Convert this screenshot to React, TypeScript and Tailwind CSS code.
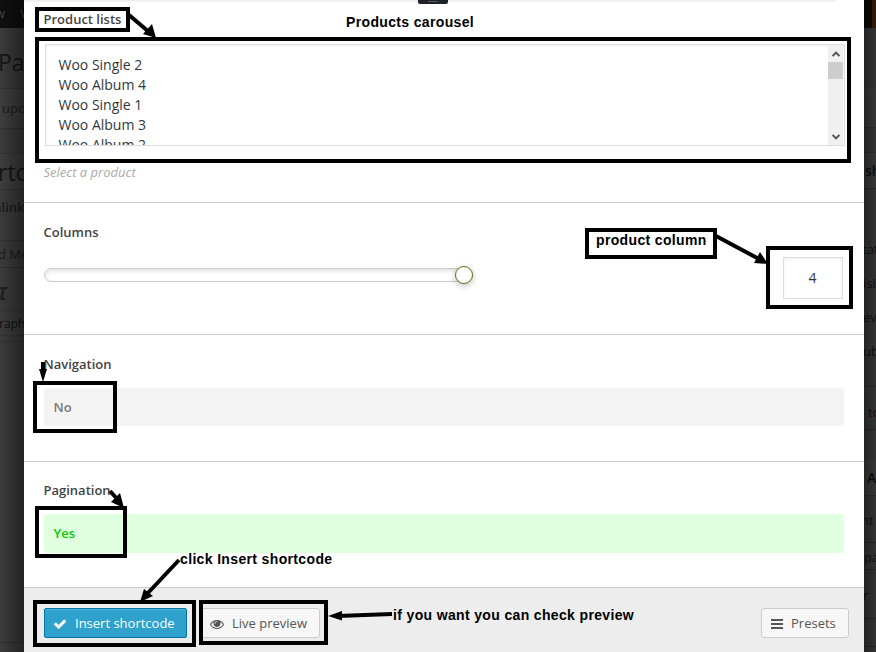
import React from 'react';

type StripRow = { height: string; text?: string; style?: string };

const leftRows: StripRow[] = [
  { height: 'h-[60px]', text: 'Pa', style: 'text-[23px] leading-[68px] -ml-[2px] text-[#161616]' },
  { height: 'h-[41px] border-y border-[#343434] bg-[#3e3e3e]', text: 'upd', style: 'text-[13px] leading-[39px] ml-[2px] text-[#1c1c1c]' },
  { height: 'h-[25px] border-b border-[#343434]' },
  { height: 'h-[36px] border-b border-[#343434] bg-[#3e3e3e]', text: 'rtc', style: 'text-[23px] leading-[36px] -ml-[2px] text-[#161616]' },
  { height: 'h-[51px] border-b border-[#343434]', text: 'alink', style: 'text-[13px] font-semibold leading-[35px] -ml-[6px] text-[#1c1c1c]' },
  { height: 'h-[27px] border-b border-[#303030]', text: 'd Me', style: 'text-[13px] leading-[26px] -ml-[2px] text-[#1c1c1c]' },
  { height: 'h-[43px] border-b border-[#343434]', text: 'I', style: 'text-[18px] leading-[51px] font-bold italic -ml-[3px] font-["DejaVu_Sans_Mono",monospace] text-[#202020]' },
  { height: 'h-[25px] border-b border-[#343434]', text: 'raph', style: 'text-[12px] leading-[26px] -ml-[1px] text-[#0f0f0f]' },
  { height: 'h-[6px] border-b border-[#343434]' },
  { height: 'h-[301px] border-b border-[#303030]' },
];

const rightRows: StripRow[] = [
  { height: 'h-[61px]' },
  { height: 'h-[39px] border-b border-[#2a2a2a] bg-[#363636]' },
  { height: 'h-[25px] border-b border-[#2c2c2c]' },
  { height: 'h-[36px] border-b border-[#2a2a2a] bg-[#363636]', text: 'sh', style: 'text-[14px] font-semibold leading-[36px] ml-[1px] text-[#0d0d0d]' },
  { height: 'h-[44px]' },
  { height: 'h-[34px]', text: 'tat', style: 'text-[13px] leading-[33px] -ml-[2px] text-[#111]' },
  { height: 'h-[34px]', text: 'isi', style: 'text-[13px] leading-[33px] -ml-[1px] text-[#111]' },
  { height: 'h-[34px]', text: 'ev', style: 'text-[13px] leading-[33px] -ml-[1px] text-[#111]' },
  { height: 'h-[52px] border-b border-[#2a2a2a]', text: 'ub', style: 'text-[13px] leading-[33px] -ml-[1px] text-[#111]' },
  { height: 'h-[43px] border-b border-[#262626]', text: 'to', style: 'text-[13px] leading-[51px] ml-[4px] text-[#2a0a0a]' },
  { height: 'h-[29px]' },
  { height: 'h-[37px] border-b border-[#2a2a2a] bg-[#363636]', text: 'A', style: 'text-[14px] font-semibold leading-[37px] ml-[3px] text-[#0d0d0d]' },
  { height: 'h-[47px] border-b border-[#262626]', text: 'nt', style: 'text-[13px] leading-[48px] -ml-[3px] text-[#111]' },
  { height: 'h-[27px] border-b border-[#262626]', text: 'pa', style: 'text-[13px] leading-[29px] text-[#111]' },
  { height: 'h-[49px] border-b border-[#262626]', text: 'r', style: 'text-[13px] leading-[50px] -ml-[1px] text-[#111]' },
  { height: 'h-[28px] border-b border-[#262626]' },
];

function Strip({ rows }: { rows: StripRow[] }) {
  return (
    <>
      {rows.map((row, i) => (
        <div key={i} className={`shrink-0 overflow-hidden whitespace-nowrap ${row.height}`}>
          {row.text && <div className={row.style}>{row.text}</div>}
        </div>
      ))}
    </>
  );
}

const products = ['Woo Single 2', 'Woo Album 4', 'Woo Single 1', 'Woo Album 3', 'Woo Album 2'];

function Label({ children }: { children: React.ReactNode }) {
  return <div className="-ml-[0.5px] h-5 text-[13px] font-semibold leading-5 text-[#444]">{children}</div>;
}

function Chevron({ up = false }: { up?: boolean }) {
  return (
    <svg width="8" height="6" viewBox="0 0 8 6" className={up ? '' : 'rotate-180'}>
      <path d="M0.6 5 4 1.6 7.4 5" fill="none" stroke="#555" strokeWidth="2" />
    </svg>
  );
}

function Check() {
  return (
    <svg width="14" height="14" viewBox="0 0 1792 1792" fill="currentColor">
      <path d="M1671 566q0 40-28 68l-724 724-136 136q-28 28-68 28t-68-28l-136-136-362-362q-28-28-28-68t28-68l136-136q28-28 68-28t68 28l294 295 656-657q28-28 68-28t68 28l136 136q28 28 28 68z" />
    </svg>
  );
}

function Eye() {
  return (
    <svg width="14" height="14" viewBox="0 0 1792 1792" fill="currentColor">
      <path d="M1664 960q-152-236-381-353 61 104 61 225 0 185-131.5 316.5t-316.5 131.5-316.5-131.5-131.5-316.5q0-121 61-225-229 117-381 353 133 205 333.5 326.5t434.5 121.5 434.5-121.5 333.5-326.5zm-720-384q0-20-14-34t-34-14q-125 0-214.5 89.5t-89.5 214.5q0 20 14 34t34 14 34-14 14-34q0-86 61-147t147-61q20 0 34-14t14-34zm848 384q0 34-20 69-140 230-376.5 368.5t-499.5 138.5-499.5-139-376.5-368q-20-35-20-69t20-69q140-229 376.5-368t499.5-139 499.5 139 376.5 368q20 35 20 69z" />
    </svg>
  );
}

function Bars() {
  return (
    <svg width="12" height="10" viewBox="0 0 12 10" fill="currentColor">
      <rect width="12" height="2" y="0" />
      <rect width="12" height="2" y="4" />
      <rect width="12" height="2" y="8" />
    </svg>
  );
}

function Modal() {
  return (
    <main className="flex w-[840px] shrink-0 flex-col bg-white">
      <section className="flex h-[203px] flex-col border-b border-[#ccc] px-5">
        <div className="-ml-5 flex h-[9px] w-[812px] items-start justify-center bg-linear-to-b from-[#e9e9e9] to-white to-30%">
          <div className="ml-[6px] flex h-1 w-[30px] justify-center rounded-b-[2px] bg-[#1f2329]">
            <div className="mt-px h-px w-[10px] bg-[#555b63]" />
          </div>
        </div>
        <Label>Product lists</Label>
        <div className="mt-[15px] ml-px flex h-[102px] w-[800px] border border-[#ddd] shadow-[inset_0_1px_3px_rgba(0,0,0,0.07)]">
          <div className="flex-1 overflow-hidden pt-[10px] pl-[12.5px] text-[14px] leading-5 text-[#32373c]">
            {products.map((p) => (
              <div key={p}>{p}</div>
            ))}
          </div>
          <div className="mr-px flex w-[15px] flex-col items-center bg-[#f0f0f0]">
            <div className="flex h-[17px] items-center"><Chevron up /></div>
            <div className="h-[17px] w-full bg-[#cdcdcd]" />
            <div className="mt-auto flex h-[17px] items-center"><Chevron /></div>
          </div>
        </div>
        <div className="mt-[16px] -ml-[0.5px] text-[13px] italic leading-5 text-[#aaa]">Select a product</div>
      </section>

      <section className="h-[132px] border-b border-[#ccc] px-5 pt-[19px]">
        <Label>Columns</Label>
        <div className="mt-[15px] flex h-[42px] items-center justify-between pr-px">
          <div className="-mt-[6px] flex h-[14px] w-[429px] items-center justify-end rounded-full border border-[#ccc] shadow-[inset_0_2px_4px_rgba(0,0,0,0.13)]">
            <div className="-mr-px size-[18px] shrink-0 rounded-full border border-[#587a10] bg-white shadow-[0_2px_6px_rgba(0,0,0,0.25)]" />
          </div>
          <div className="flex h-[42px] w-[60px] items-center justify-center border border-[#ddd] pr-px pb-px text-[14px] text-[#32373c] shadow-[inset_0_1px_3px_rgba(0,0,0,0.07)]">4</div>
        </div>
      </section>

      <section className="h-[127px] border-b border-[#ccc] px-5 pt-[19px]">
        <Label>Navigation</Label>
        <div className="mt-[14px] h-[38px] rounded-[3px] bg-[#f4f4f4] pl-[9.5px] text-[13px] font-semibold leading-[38px] text-[#777]">No</div>
      </section>

      <section className="h-[126px] border-b border-[#ccc] px-5 pt-[18px]">
        <Label>Pagination</Label>
        <div className="mt-[14px] h-[39px] rounded-[3px] bg-[#dfffdf] pl-[9.5px] text-[13px] font-semibold leading-[39px] text-[#00cc00]">Yes</div>
      </section>

      <footer className="flex flex-1 items-start bg-[#ededed] pt-5 pr-[15px] pl-5 text-[13px] text-[#555]">
        <button className="flex h-[30px] w-[143px] items-center gap-[8px] rounded-[2px] border border-[#0074a2] bg-[#2ea2cc] pt-px pl-[8px] text-white shadow-[inset_0_1px_0_rgba(120,200,230,0.5)]">
          <Check />
          Insert shortcode
        </button>
        <button className="ml-[12px] flex h-[30px] w-[121px] items-center gap-[8px] rounded-[3px] border border-[#ccc] bg-[#f7f7f7] pt-px pl-[10px]">
          <Eye />
          Live preview
        </button>
        <button className="ml-auto flex h-[30px] w-[88px] items-center gap-[8px] rounded-[3px] border border-[#ccc] bg-[#f7f7f7] pt-px pl-[9px]">
          <Bars />
          Presets
        </button>
      </footer>
    </main>
  );
}

const frames = [
  'left-[35px] top-[7px] w-[95px] h-[25px]',
  'left-[35px] top-[37px] w-[816px] h-[126px]',
  'left-[585px] top-[228px] w-[132px] h-[31px]',
  'left-[766px] top-[246px] w-[87px] h-[63px]',
  'left-[33px] top-[381px] w-[84px] h-[52px]',
  'left-[35px] top-[506px] w-[92px] h-[52px]',
  'left-[33px] top-[600px] w-[163px] h-[47px]',
  'left-[199px] top-[600px] w-[129px] h-[45px]',
];

const notes = [
  { text: 'Products carousel', place: 'left-[346px] top-[12px]' },
  { text: 'product column', place: 'left-[596px] top-[230px]' },
  { text: 'click Insert shortcode', place: 'left-[180px] top-[549px]' },
  { text: 'if you want you can check preview', place: 'left-[393px] top-[605px]' },
];

function Annotations() {
  return (
    <div className="pointer-events-none absolute inset-0">
      {frames.map((f) => (
        <div key={f} className={`absolute border-4 border-black ${f}`} />
      ))}
      <svg className="absolute inset-0" width="876" height="652" viewBox="0 0 876 652">
        <g stroke="#000" strokeWidth="4" fill="none">
          <path d="M129 15 149 32" />
          <path d="M716 236 759 259" />
          <path d="M43 362V374" />
          <path d="M110 491 118 500" />
          <path d="M179 560 147 594" />
          <path d="M392 614 338 616" />
        </g>
        <path d="M156 38 143 34 152 24Z" />
        <path d="M768 264 754 263 760 252Z" />
        <path d="M43 382 39 369H47Z" />
        <path d="M124 508 111 502 120 493Z" />
        <path d="M140 602 144 589 153 596Z" />
        <path d="M328 616 342 611V620.500Z" />
      </svg>
      {notes.map((n) => (
        <div key={n.text} className={`absolute whitespace-nowrap font-['Liberation_Sans',Arial,sans-serif] text-[14px] font-bold leading-5 tracking-[0.35px] text-black ${n.place}`}>
          {n.text}
        </div>
      ))}
    </div>
  );
}

export default function App() {
  return (
    <div className="relative flex h-[652px] w-[876px] overflow-hidden bg-[#3a3a3a] font-['Open_Sans',sans-serif]">
      <aside className="relative flex w-6 shrink-0 flex-col overflow-hidden bg-[#3b3b3b]">
        <div className="flex h-7 shrink-0 gap-[15px] overflow-hidden bg-[#0f0f0f] text-[13px] leading-[26px] text-[#4a4a4a]">
          <span className="-ml-[5px]">w</span>
          <span>V</span>
        </div>
        <Strip rows={leftRows} />
        <div className="absolute inset-0 bg-linear-to-r from-transparent to-black/40" />
      </aside>
      <Modal />
      <aside className="relative flex w-3 shrink-0 flex-col overflow-hidden bg-[#333]">
        <div className="h-7 shrink-0 border-r-4 border-[#351c08] bg-[#0a0a0a]" />
        <Strip rows={rightRows} />
        <div className="absolute inset-0 bg-linear-to-l from-transparent to-black/30" />
      </aside>
      <Annotations />
    </div>
  );
}
